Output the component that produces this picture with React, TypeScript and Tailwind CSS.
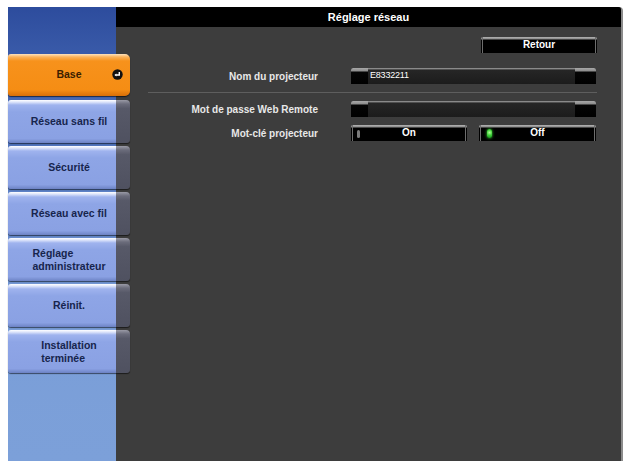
import React from "react";

const font = { fontFamily: '"Liberation Sans", Arial, sans-serif' };

type NavItem = { lines: string[] };

const navItems: NavItem[] = [
  { lines: ["Réseau sans fil"] },
  { lines: ["Sécurité"] },
  { lines: ["Réseau avec fil"] },
  { lines: ["Réglage", "administrateur"] },
  { lines: ["Réinit."] },
  { lines: ["Installation", "terminée"] },
];

function EnterIcon() {
  return (
    <svg width="11" height="11" viewBox="0 0 11 11">
      <circle cx="5.5" cy="5.5" r="5.2" fill="#111" />
      <path d="M7.3 3 V6 H3.6" stroke="#fff" strokeWidth="1.4" fill="none" />
      <path d="M2.4 6 L4.4 4.4 L4.4 7.6 Z" fill="#fff" />
    </svg>
  );
}

function BaseButton() {
  return (
    <div className="relative w-[122px] h-[42px] mb-[1px] rounded-[3px] rounded-r-[5px] bg-[linear-gradient(to_bottom,#fde3bf_0px,#fbb25a_3px,#f7921c_7px,#f58d14_85%,#d86f08_100%)] shadow-[0_1px_1px_rgba(0,0,0,0.6)] flex items-center">
      <span className="w-full text-center text-[10.5px] font-bold text-[#3a1d00]">Base</span>
      <span className="absolute right-[7px] top-[15px] flex">
        <EnterIcon />
      </span>
    </div>
  );
}

function NavButton({ item }: { item: NavItem }) {
  const multi = item.lines.length > 1;
  return (
    <div className="relative w-[122px] h-[43px] flex rounded-[3px] shadow-[0_1px_1px_rgba(0,0,0,0.55)]">
      <div className="w-[108px] h-full rounded-l-[3px] bg-[linear-gradient(to_bottom,#ffffff_0px,#dfe6fb_2px,#9fb3ee_5px,#8ea5e6_12px,#8aa1e3_90%,#6c82c4_100%)]" />
      <div className="w-[14px] h-full rounded-r-[4px] bg-[linear-gradient(to_bottom,#9a9aa6_0px,#6b6c7b_4px,#575968_20%,#4f5160_100%)]" />
      <div className="absolute inset-0 flex items-center justify-center">
        <div
          className={
            multi
              ? "text-left text-[10.5px] leading-[13px] font-bold text-[#17254d]"
              : "text-center text-[10.5px] font-bold text-[#17254d]"
          }
        >
          {item.lines.map((l) => (
            <div key={l}>{l}</div>
          ))}
        </div>
      </div>
    </div>
  );
}

function Field({ value }: { value?: string }) {
  return (
    <div className="w-[245px] h-[16px] flex bg-black rounded-t-[2px] overflow-hidden">
      <div className="w-[17px] h-full bg-[linear-gradient(to_bottom,#a8a8a8_0px,#8c8c8c_3px,#050505_4px,#000_100%)]" />
      <div className="flex-1 h-full bg-[linear-gradient(to_bottom,#9a9a9a_0px,#7a7a7a_1px,#262626_2px,#1c1c1c_100%)] flex items-center pl-[2px]">
        {value && <span className="text-[9px] text-white tracking-[-0.2px]">{value}</span>}
      </div>
      <div className="w-[21px] h-full bg-[linear-gradient(to_bottom,#a8a8a8_0px,#8c8c8c_3px,#050505_4px,#000_100%)]" />
    </div>
  );
}

function DarkButton({
  label,
  width,
  indicator,
}: {
  label: string;
  width: string;
  indicator?: "on" | "off";
}) {
  return (
    <div
      className={`${width} relative h-[16px] rounded-t-[2px] bg-[linear-gradient(to_bottom,#b5b5b5_0px,#8a8a8a_2px,#000_3px,#000_100%)] p-[0_1px_0_1px]`}
    >
      <div className="h-full border-x border-[#6d6d6d] flex items-center justify-center">
        <span className="text-[10px] font-bold text-white leading-none">{label}</span>
      </div>
      {indicator === "off" && (
        <span className="absolute left-[6px] top-[5px] w-[3px] h-[8px] rounded-full bg-[#7a7a7a]" />
      )}
      {indicator === "on" && (
        <span className="absolute left-[8px] top-[4px] w-[5px] h-[9px] rounded-full bg-[radial-gradient(circle_at_50%_40%,#b8ff9a_0%,#3fd33a_45%,#138f18_100%)] shadow-[0_0_3px_#3fe03a]" />
      )}
    </div>
  );
}

function Label({ children }: { children: React.ReactNode }) {
  return (
    <div className="w-[202px] text-right text-[10px] font-bold text-[#e8e8e8]">{children}</div>
  );
}

export default function App() {
  return (
    <div className="w-[632px] h-[465px] bg-white pt-[7px] pl-[8px]" style={font}>
      <div className="w-[615px] h-[454px] flex">
        {/* menu column */}
        <div className="relative z-10 w-[108px] h-full bg-[linear-gradient(to_bottom,#2d4c9d_0%,#3f61ae_15%,#6286c9_45%,#7a9ed8_70%,#7ca0d9_100%)] pt-[47px] flex flex-col gap-[3px]">
          <BaseButton />
          {navItems.map((it) => (
            <NavButton key={it.lines.join(" ")} item={it} />
          ))}
        </div>

        {/* settings panel */}
        <div className="flex-1 h-full bg-[#3d3d3d] flex flex-col border-r-2 border-[#8b8b8b] rounded-tr-[4px]">
          <div className="h-[20px] bg-black flex items-center justify-center rounded-tr-[3px]">
            <span className="text-[11px] font-bold text-white">Réglage réseau</span>
          </div>

          <div className="pr-[24px] pt-[10px] flex flex-col">
            <div className="flex justify-end">
              <DarkButton label="Retour" width="w-[116px]" />
            </div>

            <div className="mt-[15px] flex items-center">
              <Label>Nom du projecteur</Label>
              <div className="ml-[33px]">
                <Field value="E8332211" />
              </div>
            </div>

            <div className="mt-[8px] ml-[32px] h-[1px] bg-[#5e5e5e]" />

            <div className="mt-[8px] flex items-center">
              <Label>Mot de passe Web Remote</Label>
              <div className="ml-[33px]">
                <Field />
              </div>
            </div>

            <div className="mt-[8px] flex items-center">
              <Label>Mot-clé projecteur</Label>
              <div className="ml-[33px] flex gap-[12px]">
                <DarkButton label="On" width="w-[116px]" indicator="off" />
                <DarkButton label="Off" width="w-[117px]" indicator="on" />
              </div>
            </div>
          </div>
        </div>
      </div>
    </div>
  );
}
